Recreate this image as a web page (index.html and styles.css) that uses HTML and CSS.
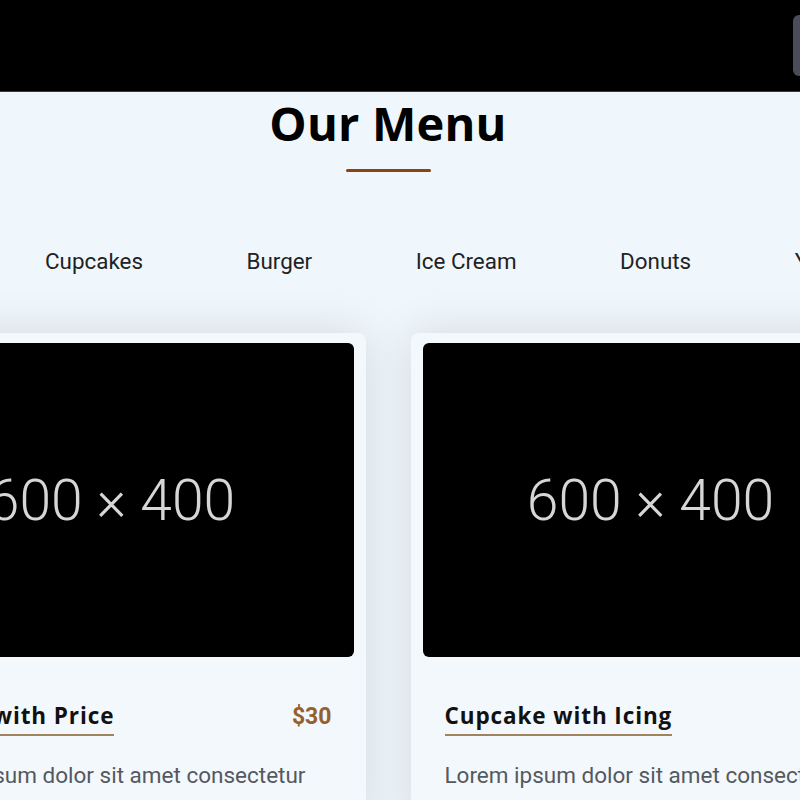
FILE: index.html
```html
<!DOCTYPE html>
<html>
<head>
<meta charset="utf-8">
<link rel="stylesheet" href="styles.css">
</head>
<body>
<header class="topbar">
  <div class="topbar-btn"></div>
</header>
<main class="menu">
  <h2 class="menu-title">Our Menu</h2>
  <div class="menu-rule"></div>
  <nav class="tabs">
    <span class="tab">Cupcakes</span>
    <span class="tab">Burger</span>
    <span class="tab">Ice Cream</span>
    <span class="tab">Donuts</span>
    <span class="tab">Yogurt</span>
  </nav>
  <div class="cards">
    <article class="card">
      <div class="card-img"><span>600 × 400</span></div>
      <div class="card-body">
        <div class="card-head">
          <h3 class="card-title">Muffin with Price</h3>
          <span class="card-price">$30</span>
        </div>
        <p class="card-text">Lorem ipsum dolor sit amet consectetur</p>
      </div>
    </article>
    <article class="card">
      <div class="card-img"><span>600 × 400</span></div>
      <div class="card-body">
        <div class="card-head">
          <h3 class="card-title">Cupcake with Icing</h3>
        </div>
        <p class="card-text">Lorem ipsum dolor sit amet consectetur</p>
      </div>
    </article>
  </div>
</main>
</body>
</html>
```

FILE: styles.css
```css
html, body {
  margin: 0;
  padding: 0;
}
body {
  background: #f0f7fc;
  overflow: hidden;
  width: 800px;
  height: 800px;
  font-family: Roboto, "Liberation Sans", sans-serif;
}
.topbar {
  height: 91px;
  background: #000;
  border-bottom: 1px solid #3c3c40;
  display: flex;
  justify-content: flex-end;
  align-items: center;
  overflow: hidden;
}
.topbar-btn {
  width: 20px;
  height: 61px;
  margin-right: -13px;
  background: #4a4c59;
  border-radius: 6px;
}
.menu {
  width: 776px;
  display: flex;
  flex-direction: column;
  align-items: center;
}
.menu-title {
  margin: 2px 0 0;
  font-family: "Open Sans", sans-serif;
  font-weight: 700;
  font-size: 47px;
  line-height: 58px;
  letter-spacing: 0.2px;
  color: #000;
}
.menu-rule {
  margin-top: 17px;
  width: 85px;
  height: 3px;
  border-radius: 2px;
  background: #8b4513;
}
.tabs {
  align-self: stretch;
  margin-top: 74px;
  padding-left: 45px;
  display: flex;
  gap: 103.5px;
  white-space: nowrap;
}
.tab {
  font-size: 22.4px;
  line-height: 30px;
  color: #222;
}
.cards {
  align-self: stretch;
  margin-top: 57px;
  display: flex;
  justify-content: center;
  gap: 45px;
}
.card {
  flex: 0 0 494px;
  box-sizing: border-box;
  padding: 10px 12px 40px 12px;
  background: #f2f8fc;
  border-radius: 8px;
  box-shadow: 0 0 45px rgba(0, 0, 0, 0.12);
}
.card-img {
  height: 314px;
  box-sizing: border-box;
  padding-right: 14px;
  background: #000;
  border-radius: 6px;
  display: flex;
  align-items: center;
  justify-content: center;
}
.card-img span {
  font-family: Roboto, sans-serif;
  font-weight: 300;
  font-size: 57px;
  color: #d6d6d6;
}
.card-body {
  padding: 0 22px;
}
.card-head {
  display: flex;
  justify-content: space-between;
  align-items: baseline;
  margin-top: 45px;
}
.card-title {
  margin: 0;
  font-family: "Open Sans", sans-serif;
  font-weight: 700;
  font-size: 22.5px;
  line-height: 28px;
  letter-spacing: 0.9px;
  color: #111;
  padding-bottom: 4px;
  border-bottom: 2px solid #a0825e;
}
.card-price {
  font-weight: 700;
  font-size: 23px;
  color: #95602e;
}
.card-text {
  margin: 25px 0 0;
  font-size: 22.5px;
  line-height: 28px;
  color: #555860;
}
```
